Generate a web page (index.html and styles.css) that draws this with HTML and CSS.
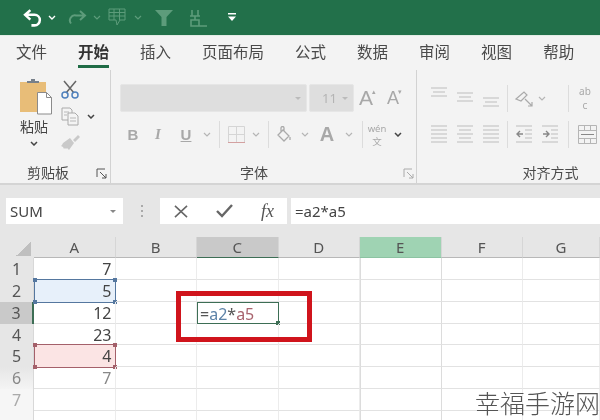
FILE: index.html
```html
<!DOCTYPE html>
<html lang="zh-CN">
<head>
    <meta charset="UTF-8">
    <title>Excel</title>
    <link rel="stylesheet" href="styles.css">
</head>
<body>
<div class="app">
    <!-- title bar -->
    <div class="titlebar">
        <span class="slot w22"><svg width="20" height="18" viewBox="0 0 19 17" fill="none" stroke="#fff" stroke-width="2.4"><path d="M7 1 2 5.5l5 4.5M2.5 5.5H11a5 5 0 0 1 0 10H8"/></svg></span>
        <span class="slot w16"><svg class="chev" viewBox="0 0 8 5"><path d="M1 1l3 3 3-3" stroke="#fff" stroke-width="1.4"/></svg></span>
        <span class="slot w34"><svg width="19" height="15" viewBox="0 0 19 15" fill="none" stroke="#5d9c7b" stroke-width="2"><path d="M12 1l5 4.5-5 4.5M16.5 5.5H8a5 5 0 0 0-5 8"/></svg></span>
        <span class="slot w6"><svg class="chev" viewBox="0 0 8 5"><path d="M1 1l3 3 3-3" stroke="#5d9c7b" stroke-width="1.2"/></svg></span>
        <span class="slot w36"><svg width="21" height="19" viewBox="0 0 21 19" fill="none" stroke="#5d9c7b" stroke-width="1"><path d="M1 1h16v11h-5l-3 5-1-5H1zM1 4.5h16M1 8h16M6 1v11M11.5 1v11"/></svg></span>
        <span class="slot w4"><svg class="chev" viewBox="0 0 8 5"><path d="M1 1l3 3 3-3" stroke="#5d9c7b" stroke-width="1.2"/></svg></span>
        <span class="slot w48"><svg width="18" height="16" viewBox="0 0 18 16"><path d="M0 0h18l-6.5 7v9h-5V7z" fill="#5d9c7b"/></svg></span>
        <span class="slot w20"><svg width="20" height="18" viewBox="0 0 20 18" fill="none" stroke="#5d9c7b" stroke-width="1.6"><path d="M4 1v6M10 1v6M2 7h10M7 7v4M19 17H8M3 11h8v6H3z"/></svg></span>
        <span class="slot w48"><svg width="8" height="9" viewBox="0 0 8 9"><path d="M0 0h8v1.5H0zM0 3.5h8L4 8z" fill="#fff"/></svg></span>
    </div>

    <!-- tabs -->
    <div class="tabs">
        <span class="tab">文件</span>
        <span class="tab active">开始</span>
        <span class="tab">插入</span>
        <span class="tab">页面布局</span>
        <span class="tab">公式</span>
        <span class="tab">数据</span>
        <span class="tab">审阅</span>
        <span class="tab">视图</span>
        <span class="tab">帮助</span>
    </div>

    <!-- ribbon -->
    <div class="ribbon">
        <section class="group clip">
            <div class="clip-body">
                <div class="paste">
                    <svg class="paste-icon" width="34" height="36" viewBox="0 0 34 36">
                        <path d="M1 3h26v30H1z" fill="#e8bd78"/>
                        <path d="M8 4V2h4V0h4v2h4v2z" fill="#77808a"/>
                        <path d="M18.5 13.5h9l5 5v16.5h-14z" fill="#fff" stroke="#8b8b8b"/>
                        <path d="M27.5 13.5v5h5" fill="none" stroke="#8b8b8b"/>
                    </svg>
                    <span class="paste-label">粘贴</span>
                    <svg class="chev dark" viewBox="0 0 8 5"><path d="M1 1l3 3 3-3"/></svg>
                </div>
                <div class="clip-tools">
                    <div class="clip-row">
                        <svg width="18" height="19" viewBox="0 0 18 19" fill="none">
                            <path d="M3 1l10 12M15 1L5 13" stroke="#666" stroke-width="1.5"/>
                            <circle cx="4" cy="15" r="3" stroke="#4f81bd" stroke-width="1.5"/>
                            <circle cx="14" cy="15" r="3" stroke="#4f81bd" stroke-width="1.5"/>
                        </svg>
                    </div>
                    <div class="clip-row">
                        <svg width="18" height="19" viewBox="0 0 18 19" fill="#f4f4f4" stroke="#aaa">
                            <path d="M1 1h8l2 2v10H1z"/>
                            <path d="M7 6h7l3 3v9H7z"/>
                            <path d="M3 5h5M3 8h3M9 11h6M9 14h6" stroke-width=".8"/>
                        </svg>
                        <svg class="chev dark side" viewBox="0 0 8 5"><path d="M1 1l3 3 3-3"/></svg>
                    </div>
                    <div class="clip-row">
                        <svg width="20" height="16" viewBox="0 0 20 16"><path d="M13 5l5-5 2 2-5 5zM3 8l7-5 4 5-5 7-2-2-1 1-1-1-1 1-1-2-2-1 1-1z" fill="#c9c9c9"/></svg>
                    </div>
                </div>
            </div>
            <div class="group-foot">
                <span class="group-name">剪贴板</span>
                <svg class="launcher" viewBox="0 0 11 11" fill="none" stroke="#555"><path d="M1 9V1h8M4 4l6 6M10 6v4H6"/></svg>
            </div>
        </section>

        <section class="group font">
            <div class="group-body">
                <div class="tool-row top">
                    <div class="combo name-box"><span class="combo-arrow"></span></div>
                    <div class="combo size-box">11<span class="combo-arrow"></span></div>
                    <span class="slot w27 glyph-a">A<sup>▴</sup></span>
                    <span class="slot w27 glyph-a small">A<sup>▾</sup></span>
                </div>
                <div class="tool-row">
                    <span class="slot w26 fmt bold">B</span>
                    <span class="slot w24 fmt italic">I</span>
                    <span class="slot w32 fmt under">U</span>
                    <span class="slot w10"><svg class="chev" viewBox="0 0 8 5"><path d="M1 1l3 3 3-3"/></svg></span>
                    <span class="slot w14"><i class="sep"></i></span>
                    <span class="slot w20"><svg width="17" height="17" viewBox="0 0 17 17" fill="none" stroke="#d5d5d5"><path d="M.5.5h16v16H.5zM8.5.5v16M.5 8.5h16"/><path d="M0 16.5h17" stroke="#d3a0a0"/></svg></span>
                    <span class="slot w20"><svg class="chev" viewBox="0 0 8 5"><path d="M1 1l3 3 3-3"/></svg></span>
                    <span class="slot w4"><i class="sep"></i></span>
                    <span class="slot w28"><svg width="16" height="17" viewBox="0 0 16 17" fill="none" stroke="#aaa" stroke-width="1.3"><path d="M5 6V2a1.5 1.5 0 0 1 3 0v3M7 4l6 6-5 5-6-6zM14 11v3"/></svg></span>
                    <span class="slot w14"><svg class="chev" viewBox="0 0 8 5"><path d="M1 1l3 3 3-3"/></svg></span>
                    <span class="slot w30 fmt letter">A</span>
                    <span class="slot w14"><svg class="chev" viewBox="0 0 8 5"><path d="M1 1l3 3 3-3"/></svg></span>
                    <span class="slot w12"><i class="sep"></i></span>
                    <span class="slot w18 wen"><b>wén</b><b>文</b></span>
                    <span class="slot w24"><svg class="chev dark" viewBox="0 0 8 5"><path d="M1 1l3 3 3-3"/></svg></span>
                </div>
            </div>
            <div class="group-foot">
                <span class="group-name">字体</span>
                <svg class="launcher" viewBox="0 0 11 11" fill="none" stroke="#aaa"><path d="M1 9V1h8M4 4l6 6M10 6v4H6"/></svg>
            </div>
        </section>

        <section class="group align">
            <div class="group-body">
                <div class="tool-row top">
                    <span class="slot w26"><svg class="lines" viewBox="0 0 18 28"><path d="M1 4h16M3 8h12M1 12h16"/></svg></span>
                    <span class="slot w26"><svg class="lines" viewBox="0 0 18 28"><path d="M1 9h16M3 13h12M1 17h16"/></svg></span>
                    <span class="slot w26"><svg class="lines" viewBox="0 0 18 28"><path d="M1 14h16M3 18h12M1 22h16"/></svg></span>
                    <span class="slot w6"><i class="sep"></i></span>
                    <span class="slot w28"><svg width="18" height="17" viewBox="0 0 18 17" fill="none" stroke="#aaa" stroke-width="1.2"><path d="M1 9l8-7 3 3-6 6zM10 9l7 7M13 16h4v-4"/></svg></span>
                    <span class="slot w8"><svg class="chev" viewBox="0 0 8 5"><path d="M1 1l3 3 3-3"/></svg></span>
                    <span class="slot w20"></span>
                    <span class="slot w4"><i class="sep"></i></span>
                    <span class="slot w30 wrap-text"><b>ab</b><b>c</b></span>
                </div>
                <div class="tool-row">
                    <span class="slot w26"><svg class="lines tall" viewBox="0 0 18 19"><path d="M1 1h16M1 5h16M1 9h16M1 13h16M1 17h16"/></svg></span>
                    <span class="slot w26"><svg class="lines tall" viewBox="0 0 18 19"><path d="M1 1h16M3 5h12M1 9h16M3 13h12M1 17h16"/></svg></span>
                    <span class="slot w26"><svg class="lines tall" viewBox="0 0 18 19"><path d="M1 1h16M1 5h16M1 9h16M1 13h16M1 17h16"/></svg></span>
                    <span class="slot w6"><i class="sep"></i></span>
                    <span class="slot w28"><svg class="lines tall" viewBox="0 0 18 19"><path d="M1 1h16M10 5h7M10 9h7M10 13h7M1 17h16"/><path d="M8 9H2m3-3L2 9l3 3" stroke="#888" stroke-width="1.4"/></svg></span>
                    <span class="slot w24"><svg class="lines tall" viewBox="0 0 18 19"><path d="M1 1h16M10 5h7M10 9h7M10 13h7M1 17h16"/><path d="M2 9h6M5 6l3 3-3 3" stroke="#888" stroke-width="1.4"/></svg></span>
                    <span class="slot w12"><i class="sep"></i></span>
                    <span class="slot w26"><svg width="19" height="19" viewBox="0 0 19 19" fill="none" stroke="#b5b5b5"><path d="M.5.5h18v18H.5zM.5 5.5h18M.5 13.5h18M6.5.5v5M12.5.5v5M6.5 13.5v5M12.5 13.5v5"/><path d="M3 9.5h13" stroke="#888"/></svg></span>
                </div>
            </div>
            <div class="group-foot">
                <span class="group-name">对齐方式</span>
            </div>
        </section>
    </div>

    <!-- formula bar -->
    <div class="formula-bar">
        <div class="name-field">SUM<span class="name-arrow"></span></div>
        <div class="grip"><i></i><i></i><i></i></div>
        <div class="fx-buttons">
            <svg width="14" height="13" viewBox="0 0 15 14" fill="none" stroke="#666" stroke-width="1.7"><path d="M1 1l13 12M14 1L1 13"/></svg>
            <svg width="17" height="14" viewBox="0 0 17 14" fill="none" stroke="#666" stroke-width="2.4"><path d="M1 7l5 5L16 1"/></svg>
            <span class="fx">fx</span>
        </div>
        <div class="formula-input">=a2*a5</div>
    </div>

    <!-- sheet -->
    <div class="sheet">
        <div class="corner"><i></i></div>
        <div class="col-head">A</div>
        <div class="col-head">B</div>
        <div class="col-head cur">C</div>
        <div class="col-head">D</div>
        <div class="col-head sel">E</div>
        <div class="col-head">F</div>
        <div class="col-head">G</div>

        <div class="row-head">1</div><div class="cell num">7</div><div class="cell"></div><div class="cell"></div><div class="cell"></div><div class="cell e"></div><div class="cell"></div><div class="cell"></div>
        <div class="row-head">2</div><div class="cell num ref blue">5<i class="h tl"></i><i class="h tr"></i><i class="h bl"></i><i class="h br"></i></div><div class="cell"></div><div class="cell"></div><div class="cell"></div><div class="cell e"></div><div class="cell"></div><div class="cell"></div>
        <div class="row-head cur">3</div><div class="cell num">12</div><div class="cell"></div><div class="cell editing">=<span class="c-blue">a2</span>*<span class="c-red">a5</span><i class="h br"></i></div><div class="cell"></div><div class="cell e"></div><div class="cell"></div><div class="cell"></div>
        <div class="row-head">4</div><div class="cell num">23</div><div class="cell"></div><div class="cell"></div><div class="cell"></div><div class="cell e"></div><div class="cell"></div><div class="cell"></div>
        <div class="row-head">5</div><div class="cell num ref red">4<i class="h tl"></i><i class="h tr"></i><i class="h bl"></i><i class="h br"></i></div><div class="cell"></div><div class="cell"></div><div class="cell"></div><div class="cell e"></div><div class="cell"></div><div class="cell"></div>
        <div class="row-head fade1">6</div><div class="cell num faded">7</div><div class="cell"></div><div class="cell"></div><div class="cell"></div><div class="cell e"></div><div class="cell"></div><div class="cell"></div>
        <div class="row-head fade2">7</div><div class="cell"></div><div class="cell"></div><div class="cell"></div><div class="cell"></div><div class="cell e"></div><div class="cell"></div><div class="cell"></div>
        <div class="row-head fade2"></div><div class="cell"></div><div class="cell"></div><div class="cell"></div><div class="cell"></div><div class="cell e"></div><div class="cell"></div><div class="cell"></div>
    </div>

    <div class="callout"></div>
    <div class="watermark">幸福手游网</div>
</div>
</body>
</html>
```

FILE: styles.css
```css
* {
    margin: 0;
    padding: 0;
    box-sizing: border-box;
}
body {
    background: #fff;
    font-family: "Noto Sans", "Noto Sans CJK SC", sans-serif;
    color: #444;
}
i {
    font-style: normal;
}
.app {
    position: relative;
    width: 600px;
    height: 420px;
    overflow: hidden;
    filter: blur(0.45px);
}

/* generic icon slots */
.slot {
    display: flex;
    align-items: center;
    justify-content: center;
    flex: none;
    height: 100%;
}
.w4 { width: 4px; }
.w6 { width: 6px; }
.w8 { width: 8px; }
.w10 { width: 10px; }
.w12 { width: 12px; }
.w14 { width: 14px; }
.w16 { width: 16px; }
.w18 { width: 18px; }
.w20 { width: 20px; }
.w22 { width: 22px; }
.w24 { width: 24px; }
.w26 { width: 26px; }
.w27 { width: 27px; }
.w28 { width: 28px; }
.w30 { width: 30px; }
.w32 { width: 32px; }
.w34 { width: 34px; }
.w36 { width: 36px; }
.w48 { width: 48px; }

.chev {
    flex: none;
    width: 8px;
    height: 5px;
    fill: none;
    stroke: #b5b5b5;
    stroke-width: 1.2;
}
.chev.dark {
    stroke: #444;
    stroke-width: 1.5;
}
.sep {
    display: block;
    width: 1px;
    height: 27px;
    background: #dcdcdc;
}

/* title bar */
.titlebar {
    display: flex;
    align-items: center;
    height: 36px;
    padding-left: 22px;
    background: #22704a;
    border-bottom: 1px solid #e3ece6;
}

/* tabs */
.tabs {
    display: flex;
    gap: 31px;
    height: 34px;
    padding: 4px 0 0 16px;
    background: #f3f3f3;
}
.tab {
    position: relative;
    height: 28px;
    font-size: 15.5px;
    line-height: 24px;
    color: #4a4a4a;
}
.tab.active {
    font-weight: 700;
    color: #333;
    border-bottom: 3px solid #1f6b45;
}

/* ribbon */
.ribbon {
    display: flex;
    height: 115px;
    background: #f3f3f3;
    border-bottom: 2px solid #d4d4d4;
}
.group {
    display: flex;
    flex-direction: column;
    flex: none;
    border-right: 1px solid #d2d2d2;
}
.clip { width: 111px; }
.font { width: 306px; }
.align { flex: 1; border-right: none; }
.group-body {
    flex: 1;
    padding-top: 14px;
    padding-left: 9px;
}
.clip-body {
    display: flex;
    flex: 1;
    padding: 9px 0 0 14px;
}
.group-foot {
    display: flex;
    align-items: center;
    height: 20px;
}
.group-name {
    flex: 1;
    font-size: 14px;
    line-height: 20px;
    text-align: center;
    color: #4a4a4a;
}
.font .group-name { padding-right: 6px; }
.align .group-name { padding-left: 84px; }
.launcher {
    flex: none;
    width: 11px;
    height: 11px;
    margin-right: 3px;
}
.font .launcher { margin-right: 2px; }

/* clipboard */
.paste {
    display: flex;
    flex-direction: column;
    align-items: center;
    width: 40px;
}
.paste-icon { margin-left: 4px; }
.paste-label {
    font-size: 14px;
    line-height: 22px;
    margin-top: 1px;
    color: #444;
}
.paste .chev { margin-top: 3px; }
.clip-tools {
    display: flex;
    flex-direction: column;
    gap: 7px;
    width: 32px;
}
.clip-row {
    position: relative;
    display: flex;
    align-items: center;
    justify-content: center;
    height: 20px;
}
.clip-row .side {
    position: absolute;
    left: 33px;
    top: 8px;
}

/* font + alignment */
.tool-row {
    display: flex;
    height: 25px;
}
.tool-row.top {
    height: 28px;
    margin-bottom: 10px;
}
.combo {
    position: relative;
    height: 28px;
    background: #dedede;
    border: 1px solid #e6e6e6;
    border-radius: 2px;
}
.name-box {
    width: 187px;
    margin-right: 2px;
}
.size-box {
    width: 45px;
    padding-left: 12px;
    font-size: 13px;
    line-height: 26px;
    color: #b4b4b4;
}
.combo-arrow {
    position: absolute;
    right: 5px;
    top: 12px;
    border: 3px solid transparent;
    border-top-color: #bbb;
}
.glyph-a {
    font-family: "Liberation Sans", sans-serif;
    font-size: 21px;
    color: #a8a8a8;
}
.glyph-a sup {
    font-size: 7px;
    margin: -12px 0 0 -1px;
}
.glyph-a.small { font-size: 18px; }
.fmt {
    font-family: "Liberation Sans", sans-serif;
    font-size: 15px;
    color: #a8a8a8;
}
.bold { font-weight: 700; }
.italic { font-style: italic; font-family: "Liberation Serif", serif; font-weight: 700; }
.under { text-decoration: underline; font-weight: 700; }
.letter { font-size: 20px; font-weight: 700; }
.wen,
.wrap-text {
    flex-direction: column;
    color: #a8a8a8;
}
.wen b,
.wrap-text b {
    display: block;
    flex: none;
    font-weight: 400;
}
.wen b {
    height: 13px;
    font-size: 9.5px;
    line-height: 13px;
}
.wrap-text b {
    height: 14px;
    font-size: 10px;
    line-height: 14px;
}
.lines {
    width: 18px;
    height: 28px;
    fill: none;
    stroke: #bdbdbd;
    stroke-width: 1;
}
.lines.tall {
    height: 19px;
}

/* formula bar */
.formula-bar {
    display: flex;
    height: 52px;
    padding: 13px 0 13px 6px;
    background: #e6e6e6;
}
.name-field {
    position: relative;
    width: 117px;
    padding-left: 4px;
    font-size: 15px;
    line-height: 26px;
    color: #444;
    background: #fff;
}
.name-arrow {
    position: absolute;
    right: 7px;
    top: 12px;
    border: 3px solid transparent;
    border-top-color: #888;
}
.grip {
    display: flex;
    flex-direction: column;
    align-items: center;
    justify-content: center;
    gap: 3px;
    width: 37px;
}
.grip i {
    width: 2px;
    height: 2px;
    background: #aaa;
}
.fx-buttons {
    display: flex;
    align-items: center;
    justify-content: space-between;
    width: 127px;
    padding: 0 13px 0 14px;
    margin-right: 4px;
    background: #fff;
}
.fx {
    font-family: "Liberation Serif", serif;
    font-style: italic;
    font-size: 18px;
    color: #555;
}
.formula-input {
    flex: 1;
    padding-left: 4px;
    font-size: 15px;
    line-height: 26px;
    color: #444;
    background: #fff;
}

/* sheet */
.sheet {
    display: grid;
    grid-template-columns: 34px repeat(6, 81.5px) 1fr;
    grid-template-rows: 21px;
    grid-auto-rows: 21.85px;
    background: #fff;
}
.corner {
    display: flex;
    align-items: flex-end;
    justify-content: flex-end;
    padding: 0 3px 2px 0;
    background: #e6e6e6;
}
.corner i {
    width: 15px;
    height: 15px;
    background: linear-gradient(135deg, transparent 50%, #bfbfbf 50%);
}
.col-head {
    font-size: 15px;
    line-height: 20px;
    text-align: center;
    color: #555;
    background: #e6e6e6;
    border-bottom: 1px solid #b8b8b8;
    border-right: 1px solid #d6d6d6;
}
.col-head.cur {
    background: #c9c9c9;
    border-bottom: 1px solid #3d6e55;
}
.col-head.sel {
    background: #9fd3b3;
    border-bottom-color: #8cc3a2;
}
.row-head {
    font-size: 16px;
    line-height: 22px;
    text-align: center;
    color: #555;
    background: #e6e6e6;
    border-right: 1px solid #d8d8d8;
}
.row-head.cur {
    background: #c9c9c9;
    border-right: 2px solid #3d6e55;
}
.row-head.fade1 {
    color: #888;
    background: linear-gradient(#e6e6e6, #f4f4f4);
}
.row-head.fade2 {
    color: #aaa;
    background: #f6f6f6;
}
.cell {
    position: relative;
    font-size: 16px;
    line-height: 22px;
    border-right: 1px solid #ececec;
    border-bottom: 1px solid #e2e2e2;
}
.cell.e {
    border-right-color: #dcdcdc;
    border-left: 1px solid #dcdcdc;
}
.num {
    padding-right: 3px;
    text-align: right;
    color: #444;
}
.num.faded { color: #888; }
.ref {
    margin: -1px 0;
    border: 1.5px solid;
}
.ref.blue {
    background: #e7f0fa;
    border-color: #55779f;
}
.ref.red {
    background: #fbe4e4;
    border-color: #a4606a;
}
.editing {
    padding-left: 2px;
    color: #555;
    border: 1.5px solid #3d6e55;
}
.c-blue { color: #5d83a8; }
.c-red { color: #a8636d; }
.h {
    position: absolute;
    width: 4px;
    height: 4px;
    background: #55779f;
}
.red .h { background: #a4606a; }
.editing .h { background: #3d6e55; }
.tl { left: -2px; top: -2px; }
.tr { right: -2px; top: -2px; }
.bl { left: -2px; bottom: -2px; }
.br { right: -2px; bottom: -2px; }

/* annotation on top of the picture */
.callout {
    position: absolute;
    left: 176px;
    top: 291px;
    width: 136px;
    height: 51px;
    border: 5px solid #d0141c;
}
.watermark {
    position: absolute;
    right: 0;
    bottom: 3px;
    font-family: "Noto Sans CJK SC", sans-serif;
    font-size: 25px;
    font-weight: 300;
    line-height: 30px;
    color: #555;
}
```
